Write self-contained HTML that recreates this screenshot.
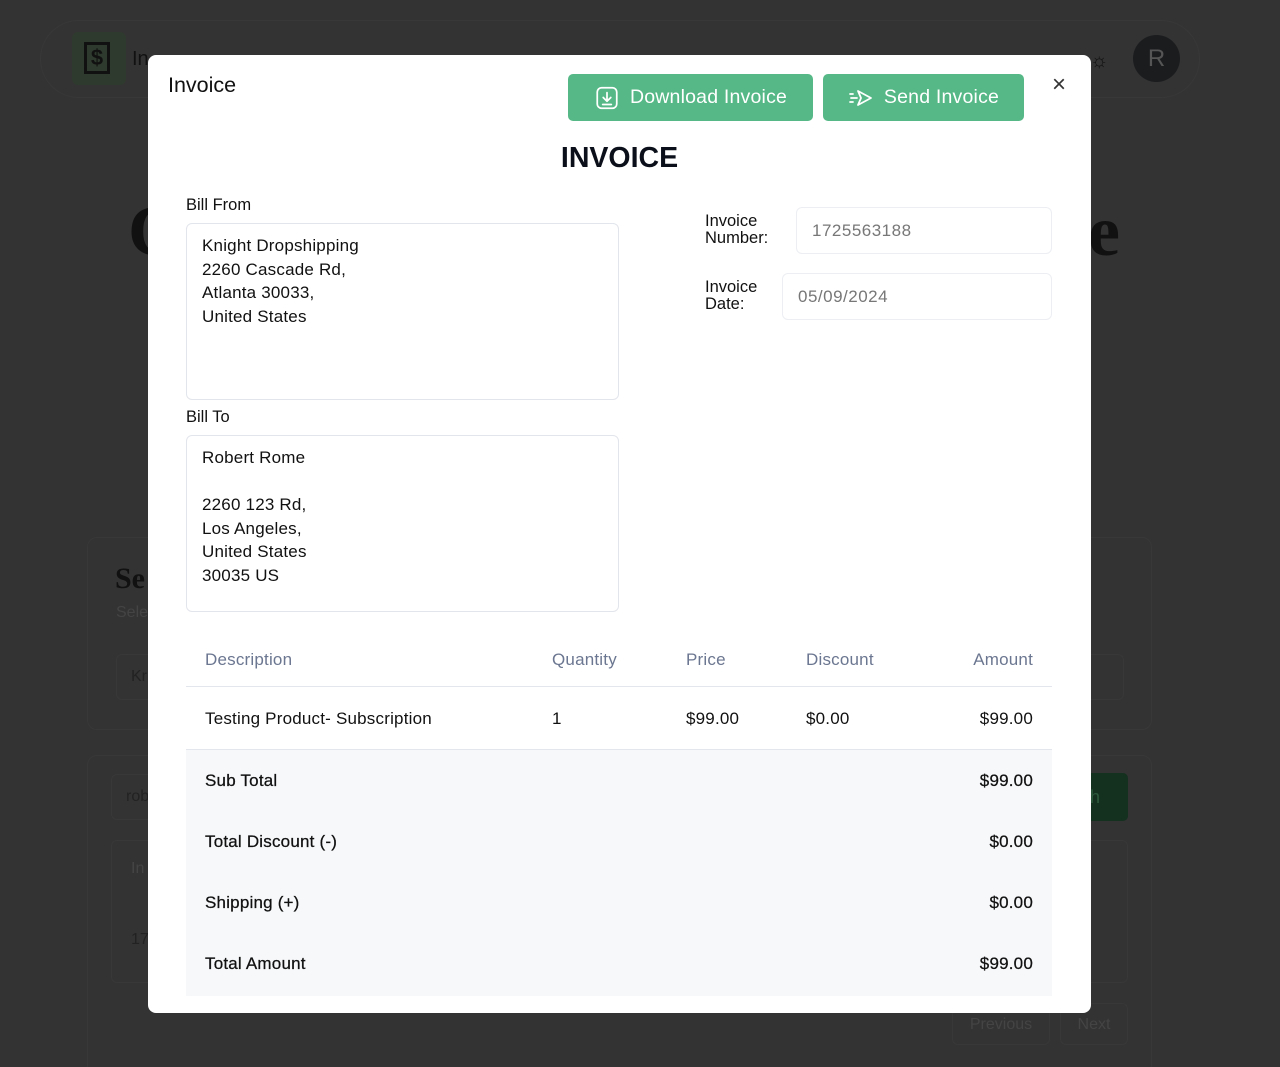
<!DOCTYPE html>
<html><head><meta charset="utf-8"><style>
*{box-sizing:border-box;margin:0;padding:0}
html,body{width:1280px;height:1067px;overflow:hidden}
body{background:#333333;font-family:"Liberation Sans",sans-serif;position:relative}
.abs{position:absolute}
.modal{position:absolute;left:148px;top:55px;width:943px;height:958px;background:#fff;border-radius:8px;color:#0b0f19}
.btn{position:absolute;top:19px;height:47px;background:#55b886;border-radius:5px;color:#fff;font-size:19.5px;display:flex;align-items:center;gap:10px;justify-content:center;letter-spacing:.2px}
.ta{position:absolute;border:1px solid #e2e5ec;border-radius:6px;padding:10px 15px;font-size:17px;line-height:23.5px;color:#111;letter-spacing:.2px}
.lbl{position:absolute;font-size:16.5px;color:#111}
.inp{position:absolute;border:1px solid #eceef3;border-radius:6px;height:47px;font-size:17px;color:#777;padding:0 15px;display:flex;align-items:center;letter-spacing:.5px}
.row{position:absolute;left:38px;width:866px;font-size:17px;letter-spacing:.2px}
.row span{position:absolute}
</style></head><body>
<div class="abs" style="left:40px;top:20px;width:1160px;height:78px;border:1px solid #383838;border-radius:40px"></div>
<div class="abs" style="left:72px;top:32px;width:54px;height:53px;background:#2f3a2e;border-radius:6px"></div>
<div class="abs" style="left:84px;top:42px;width:26px;height:32px;border:3px solid #111;font-weight:bold;font-size:22px;color:#111;text-align:center;line-height:26px">$</div>
<div class="abs" style="left:132px;top:48px;font-size:20px;color:#111">In</div>
<div class="abs" style="left:1133px;top:35px;width:47px;height:47px;border-radius:50%;background:#1a1c1e;color:#555;font-size:24px;text-align:center;line-height:47px">R</div>
<div class="abs" style="left:1090px;top:50px;color:#111;font-size:20px">☼</div>
<div class="abs" style="left:128px;top:190px;font-family:'Liberation Serif',serif;font-size:72px;font-weight:bold;color:#111">C</div>
<div class="abs" style="left:1088px;top:190px;font-family:'Liberation Serif',serif;font-size:72px;font-weight:bold;color:#111">e</div>
<div class="abs" style="left:87px;top:537px;width:1065px;height:193px;border:1px solid #383838;border-radius:10px"></div>
<div class="abs" style="left:115px;top:562px;font-family:'Liberation Serif',serif;font-size:30px;font-weight:bold;color:#111">Se</div>
<div class="abs" style="left:116px;top:604px;font-size:16px;color:#444">Sele</div>
<div class="abs" style="left:116px;top:654px;width:1008px;height:46px;border:1px solid #383838;border-radius:6px"></div>
<div class="abs" style="left:131px;top:668px;font-size:16px;color:#222">Kr</div>
<div class="abs" style="left:87px;top:755px;width:1065px;height:312px;border:1px solid #383838;border-bottom:none;border-radius:10px 10px 0 0"></div>
<div class="abs" style="left:111px;top:774px;width:1000px;height:46px;border:1px solid #383838;border-radius:6px"></div>
<div class="abs" style="left:126px;top:788px;font-size:16px;color:#222">rob</div>
<div class="abs" style="left:1080px;top:773px;width:48px;height:48px;background:#14301f;border-radius:5px;color:#2d5a3c;font-size:18px;line-height:48px;padding-left:10px">h</div>
<div class="abs" style="left:111px;top:840px;width:1017px;height:143px;border:1px solid #383838;border-radius:6px"></div>
<div class="abs" style="left:131px;top:860px;font-size:16px;color:#444">In</div>
<div class="abs" style="left:131px;top:931px;font-size:16px;color:#222">17</div>
<div class="abs" style="left:952px;top:1003px;width:98px;height:42px;border:1px solid #383838;border-radius:6px;color:#444;font-size:16px;text-align:center;line-height:42px">Previous</div>
<div class="abs" style="left:1060px;top:1003px;width:68px;height:42px;border:1px solid #383838;border-radius:6px;color:#444;font-size:16px;text-align:center;line-height:42px">Next</div>

<div class="modal">
<div class="abs" style="left:20px;top:18px;font-size:21.5px;color:#111">Invoice</div>
<div class="btn" style="left:420px;width:245px">
<svg width="26" height="26" viewBox="0 0 24 24" fill="none" stroke="#fff" stroke-width="1.6" stroke-linecap="round" stroke-linejoin="round"><rect x="3" y="2.5" width="18" height="19" rx="4"/><path d="M12 7v8M8.5 11.5L12 15l3.5-3.5M8 18h8"/></svg>Download Invoice</div>
<div class="btn" style="left:675px;width:201px">
<svg width="26" height="24" viewBox="0 0 26 24" fill="none" stroke="#fff" stroke-width="1.8" stroke-linecap="round" stroke-linejoin="round"><path d="M10 5l13 7-13 7 3-7z"/><path d="M2 8h3M3 12h6M2 16h3"/></svg>Send Invoice</div>
<div class="abs" style="left:904px;top:16px;font-size:24px;color:#333">×</div>
<div class="abs" style="left:0;width:943px;top:87px;text-align:center;font-size:28.5px;font-weight:bold;color:#0b0f19">INVOICE</div>
<div class="lbl" style="left:38px;top:141px">Bill From</div>
<div class="ta" style="left:38px;top:168px;width:433px;height:177px">Knight Dropshipping<br>2260 Cascade Rd,<br>Atlanta 30033,<br>United States</div>
<div class="lbl" style="left:38px;top:353px">Bill To</div>
<div class="ta" style="left:38px;top:380px;width:433px;height:177px">Robert Rome<br><br>2260 123 Rd,<br>Los Angeles,<br>United States<br>30035 US</div>
<div class="lbl" style="left:557px;top:158px;line-height:16.5px">Invoice<br>Number:</div>
<div class="inp" style="left:648px;top:152px;width:256px">1725563188</div>
<div class="lbl" style="left:557px;top:224px;line-height:16.5px">Invoice<br>Date:</div>
<div class="inp" style="left:634px;top:218px;width:270px">05/09/2024</div>
<div class="row" style="top:595px;color:#6b7690;height:37px;border-bottom:1px solid #e3e6ec"><span style="left:19px">Description</span><span style="left:366px">Quantity</span><span style="left:500px">Price</span><span style="left:620px">Discount</span><span style="right:19px">Amount</span></div>
<div class="row" style="top:632px;height:63px;border-bottom:1px solid #e3e6ec;color:#111"><span style="left:19px;top:22px">Testing Product- Subscription</span><span style="left:366px;top:22px">1</span><span style="left:500px;top:22px">$99.00</span><span style="left:620px;top:22px">$0.00</span><span style="right:19px;top:22px">$99.00</span></div>
<div class="row" style="top:695px;height:246px;background:#f7f8fa;color:#111;-webkit-text-stroke:.25px #111">
<span style="left:19px;top:21px">Sub Total</span><span style="right:19px;top:21px">$99.00</span>
<span style="left:19px;top:82px">Total Discount (-)</span><span style="right:19px;top:82px">$0.00</span>
<span style="left:19px;top:143px">Shipping (+)</span><span style="right:19px;top:143px">$0.00</span>
<span style="left:19px;top:204px">Total Amount</span><span style="right:19px;top:204px">$99.00</span>
</div>
</div>
</body></html>
